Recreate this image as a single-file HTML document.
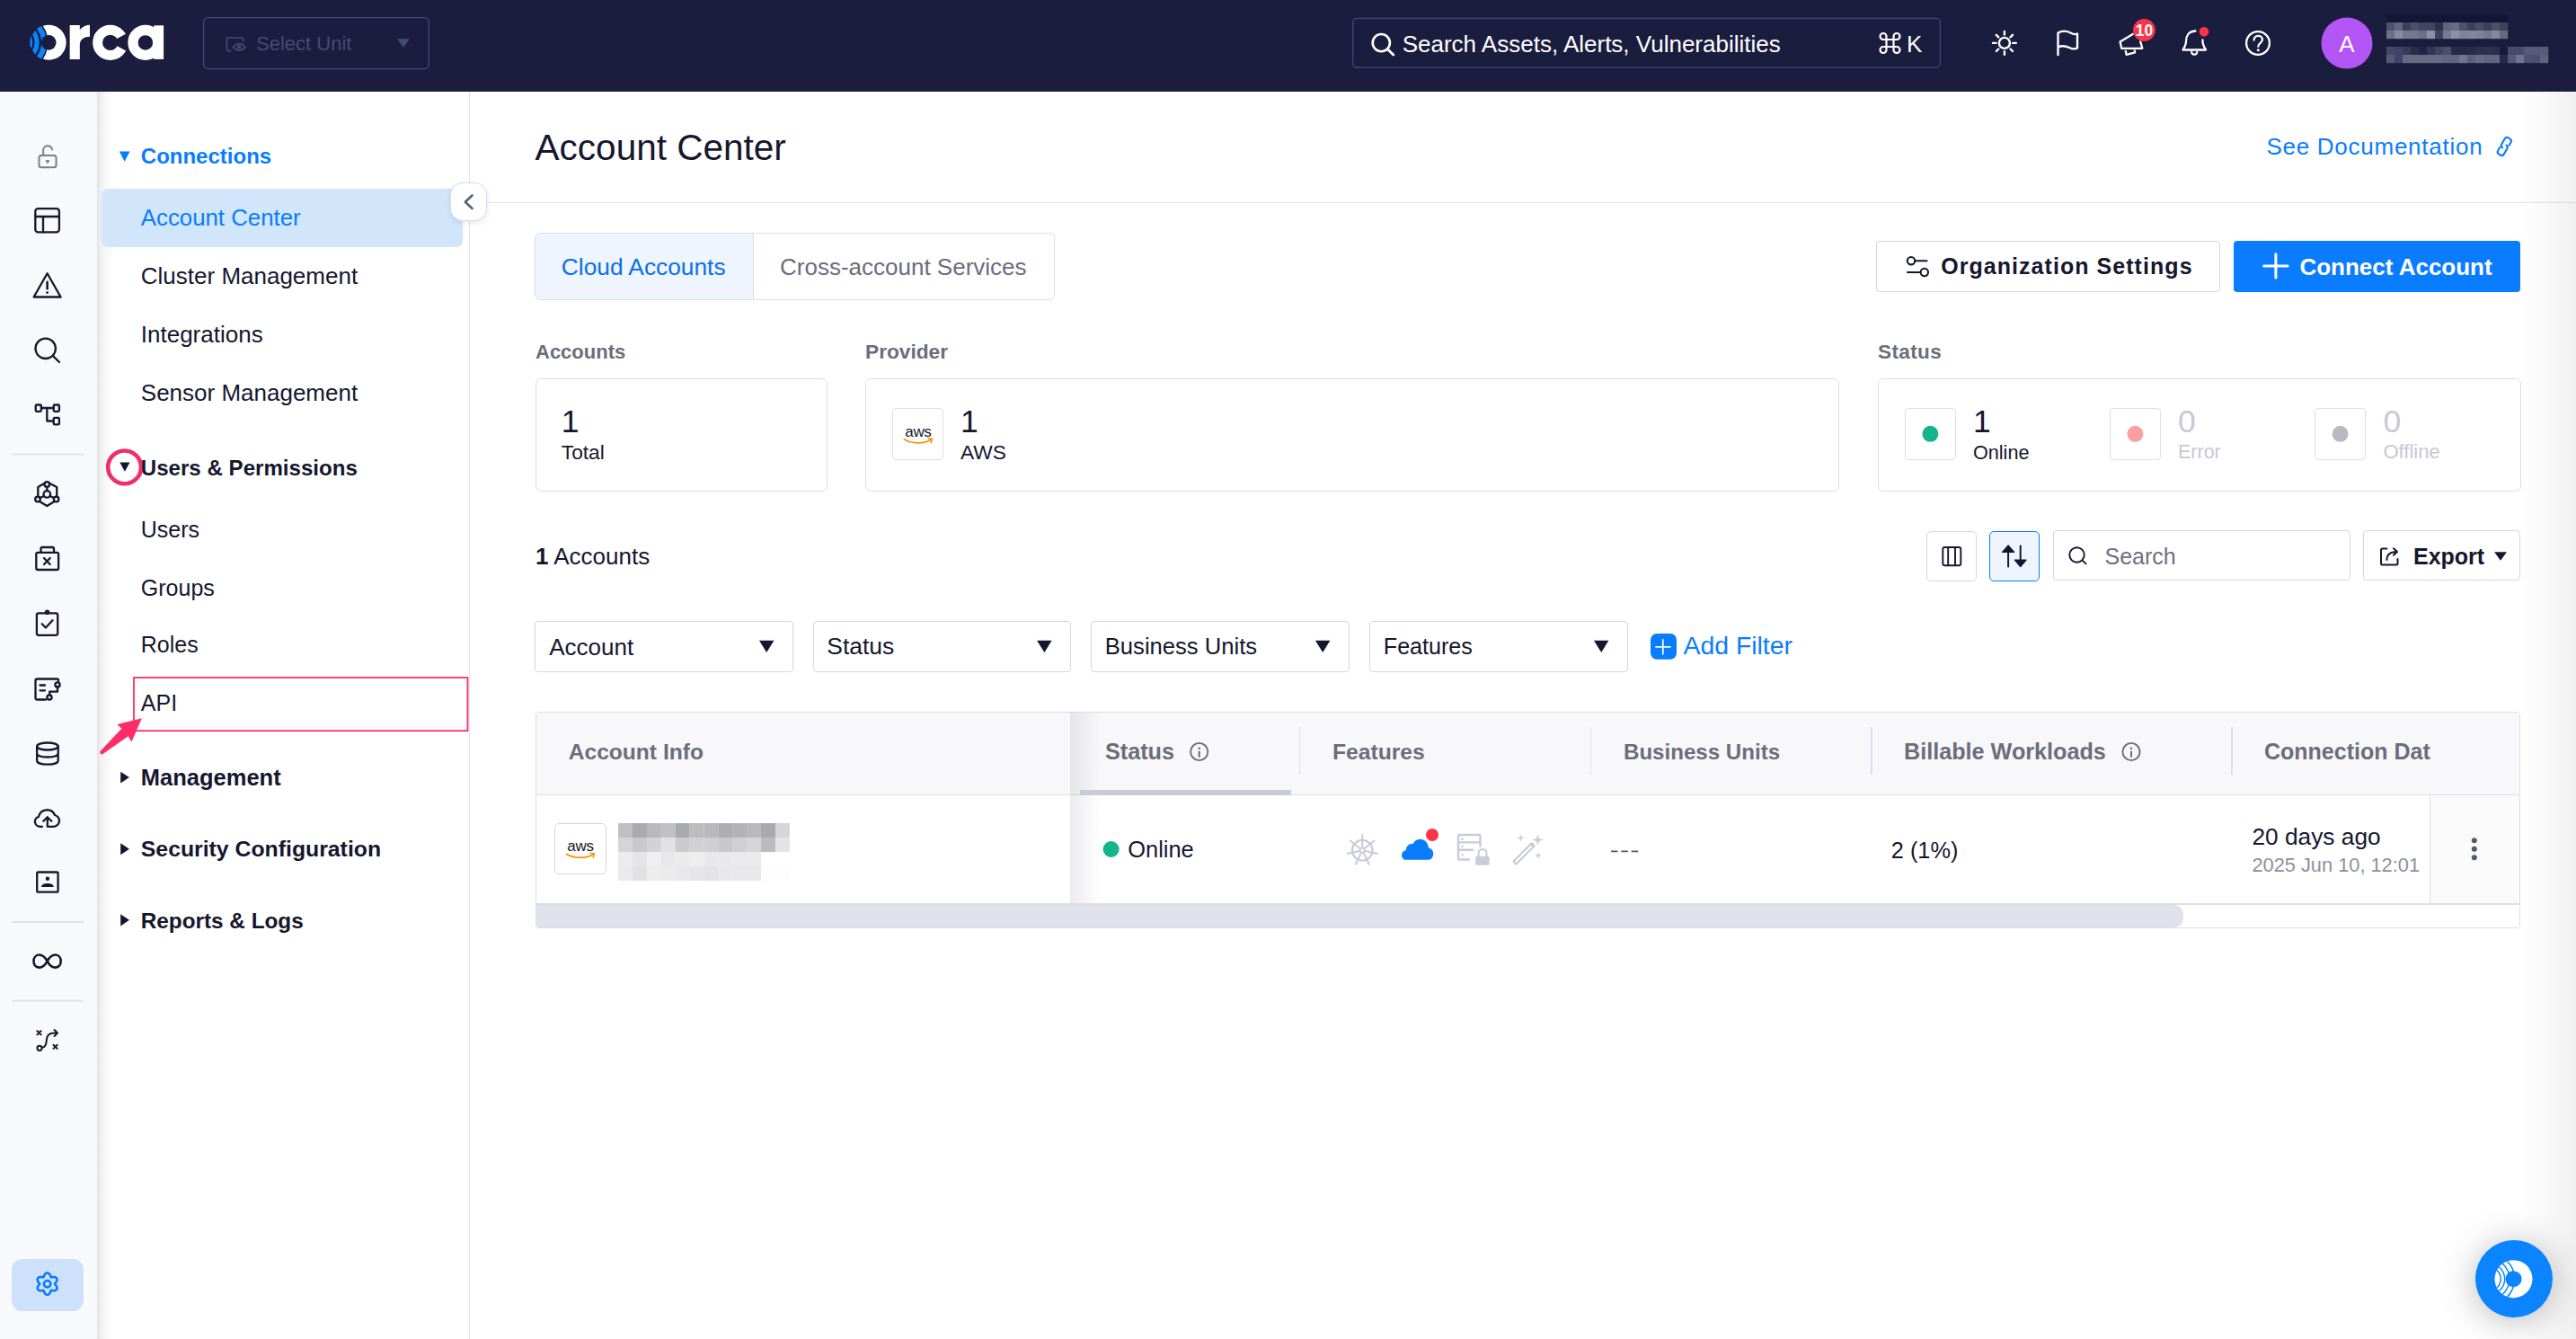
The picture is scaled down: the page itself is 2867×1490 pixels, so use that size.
<!DOCTYPE html>
<html><head><meta charset="utf-8"><title>Account Center</title>
<style>
*{box-sizing:border-box;margin:0;padding:0}
html,body{width:2867px;height:1490px;overflow:hidden;background:#fff;font-family:"Liberation Sans",sans-serif;color:#15172e}
.a{position:absolute}
.t{position:absolute;line-height:1;white-space:nowrap}
.b{font-weight:700}
#hdr{position:absolute;left:0;top:0;width:2867px;height:102px;background:#1b1d3e}
#rail{position:absolute;left:0;top:102px;width:109px;height:1388px;background:#f8f9fb;border-right:1px solid #dfe1ec}
#side{position:absolute;left:109px;top:102px;width:414px;height:1388px;background:#fff;border-right:1px solid #e3e5ec}
#side:before{content:"";position:absolute;left:0;top:0;width:18px;height:100%;background:linear-gradient(to right,rgba(0,0,0,.09),rgba(0,0,0,.03) 40%,rgba(0,0,0,0))}
.box{position:absolute;border:1.5px solid #dcdfe7;border-radius:6px;background:#fff}
</style></head>
<body>
<div id="hdr">
<svg class="a" style="left:0;top:0" width="2867" height="102" viewBox="0 0 2867 102">
 <defs><clipPath id="oc1"><circle cx="54.19" cy="47.35" r="20"/></clipPath><clipPath id="oc2"><circle cx="54.19" cy="47.35" r="20.9"/></clipPath></defs>
 <circle cx="54.19" cy="47.35" r="19.5" fill="#fff"/>
 <g clip-path="url(#oc1)">
  <circle cx="21.6" cy="47.35" r="32.02" fill="#1b1d3e"/>
  <circle cx="21.6" cy="47.35" r="27.5" fill="none" stroke="#0a84ff" stroke-width="5.8"/>
  <circle cx="21.6" cy="47.35" r="19.45" fill="none" stroke="#0a84ff" stroke-width="5.1"/>
 </g>
 <g clip-path="url(#oc2)"><circle cx="21.6" cy="47.35" r="13.0" fill="none" stroke="#0a84ff" stroke-width="3.2"/></g>
 <circle cx="54.19" cy="47.35" r="8.4" fill="#1b1d3e"/>
 <g transform="translate(20,10) scale(0.06988)" fill="#fff">
  
  <path d="M825,258 H985 V330 C1030,280 1090,255 1145,255 V440 C1060,440 985,480 985,570 V800 H825 Z"/>
  <circle cx="1470" cy="535" r="202" fill="none" stroke="#fff" stroke-width="156"/>
  <path d="M1470,530 L1830,335 L1830,725 Z" fill="#1b1d3e"/>
  <circle cx="2030" cy="535" r="199" fill="none" stroke="#fff" stroke-width="162"/>
  <rect x="2165" y="262" width="155" height="538"/>
 </g>
 <!-- select unit -->
 <rect x="226.6" y="19.6" width="250.6" height="57" rx="5" fill="none" stroke="#454d70" stroke-width="1.2"/>
 <g fill="none" stroke="#444c6d" stroke-width="1.7" stroke-linejoin="round">
  <path d="M257.5,56.6 H254 A1.6,1.6 0 0 1 252.4,55 V43.6 A1.6,1.6 0 0 1 254,42 H269 A1.6,1.6 0 0 1 270.6,43.6 V46.5"/>
  <path d="M259.3,52.3 Q266.2,44.8 273.1,52.3 Q266.2,59.8 259.3,52.3 Z"/>
 </g>
 <circle cx="266.2" cy="52.2" r="2.2" fill="#444c6d"/>
 <path d="M442,43.3 H456 L449,52.8 Z" fill="#444c6d"/>
 <!-- search -->
 <rect x="1505.75" y="20.5" width="653.5" height="54.5" rx="4" fill="none" stroke="#3d4466" stroke-width="1.5"/>
 <circle cx="1537.3" cy="47.6" r="9.6" fill="none" stroke="#fff" stroke-width="2.6"/>
 <path d="M1544.4,54.7 L1550.8,61.1" stroke="#fff" stroke-width="2.8" stroke-linecap="round"/>
 <!-- cmd symbol -->
 <g fill="none" stroke="#fff" stroke-width="2.2" transform="translate(2092.5,37)">
  <path d="M7,7 V15 M15,7 V15 M7,7 H15 M7,15 H15"/>
  <path d="M7,7 H3.5 A3.5,3.5 0 1 1 7,3.5 Z"/>
  <path d="M15,7 V3.5 A3.5,3.5 0 1 1 18.5,7 Z"/>
  <path d="M7,15 V18.5 A3.5,3.5 0 1 1 3.5,15 Z"/>
  <path d="M15,15 H18.5 A3.5,3.5 0 1 1 15,18.5 Z"/>
 </g>
 <!-- sun -->
 <g stroke="#fff" stroke-width="2.4" stroke-linecap="round" fill="none">
  <circle cx="2230.9" cy="47.9" r="6"/>
  <path d="M2230.9,35 V38.6 M2230.9,57.2 V60.8 M2218,47.9 H2221.6 M2240.2,47.9 H2243.8 M2221.8,38.8 L2224.3,41.3 M2237.5,54.5 L2240,57 M2221.8,57 L2224.3,54.5 M2237.5,41.3 L2240,38.8"/>
 </g>
 <!-- flag -->
 <g stroke="#fff" stroke-width="2.4" stroke-linecap="round" stroke-linejoin="round" fill="none">
  <path d="M2290.5,61 V36.5 C2297,33 2302,35 2305.5,37 C2308,38.3 2310,38.5 2312,37.5 V53.5 C2309,55 2306,54.5 2303,53 C2299,51 2295,50.5 2290.5,52.5"/>
 </g>
 <!-- megaphone -->
 <g stroke="#fff" stroke-width="2.3" stroke-linejoin="round" fill="none">
  <path d="M2374.5,37.5 L2359.6,46.4 L2361.2,53.8 L2384.3,53.8 L2382,45.5"/>
  <path d="M2365.6,56 L2366.6,60.8 L2376.1,58.3 L2375.4,55.4"/>
 </g>
 <circle cx="2386.4" cy="33.4" r="12.4" fill="#ff3347"/>
 <text x="2386.4" y="39.8" text-anchor="middle" font-family="Liberation Sans" font-weight="700" font-size="17.5" fill="#fff">10</text>
 <!-- bell -->
 <g stroke="#fff" stroke-width="2.3" stroke-linecap="round" stroke-linejoin="round" fill="none">
  <path d="M2443.5,34.5 C2436,34.5 2433,40 2433,46 C2433,50 2431,53 2429.5,55.5 H2455 C2453.5,53 2451.5,50 2451.5,46 V44.5"/>
  <path d="M2439.2,58 C2439.5,61.5 2445,61.5 2445.2,58"/>
 </g>
 <circle cx="2453" cy="35.3" r="5.3" fill="#ff3347"/>
 <!-- help -->
 <circle cx="2513" cy="48" r="12.9" fill="none" stroke="#fff" stroke-width="2.3"/>
 <path d="M2508.6,44.6 C2508.6,41.4 2510.8,39.8 2513.2,39.8 C2516,39.8 2518,41.6 2518,44 C2518,47.8 2513.3,48 2513.3,51.8" fill="none" stroke="#fff" stroke-width="2.3" stroke-linecap="round"/>
 <circle cx="2513.3" cy="55.8" r="1.5" fill="#fff"/>
 <!-- avatar -->
 <circle cx="2612" cy="48" r="28.5" fill="#b455f5"/>
 <text x="2612" y="57.5" text-anchor="middle" font-family="Liberation Sans" font-size="26" fill="#fff">A</text>
 <rect x="2656" y="16" width="9.2" height="9.2" fill="#141637"/><rect x="2665" y="16" width="9.2" height="9.2" fill="#141637"/><rect x="2674" y="16" width="9.2" height="9.2" fill="#141637"/><rect x="2683" y="16" width="9.2" height="9.2" fill="#141637"/><rect x="2692" y="16" width="9.2" height="9.2" fill="#141637"/><rect x="2701" y="16" width="9.2" height="9.2" fill="#141637"/><rect x="2710" y="16" width="9.2" height="9.2" fill="#141637"/><rect x="2719" y="16" width="9.2" height="9.2" fill="#141637"/><rect x="2728" y="16" width="9.2" height="9.2" fill="#141637"/><rect x="2737" y="16" width="9.2" height="9.2" fill="#141637"/><rect x="2746" y="16" width="9.2" height="9.2" fill="#141637"/><rect x="2755" y="16" width="9.2" height="9.2" fill="#141637"/><rect x="2764" y="16" width="9.2" height="9.2" fill="#141637"/><rect x="2773" y="16" width="9.2" height="9.2" fill="#141637"/><rect x="2782" y="16" width="9.2" height="9.2" fill="#141637"/><rect x="2656" y="25" width="9.2" height="9.2" fill="#4f5170"/><rect x="2665" y="25" width="9.2" height="9.2" fill="#626480"/><rect x="2674" y="25" width="9.2" height="9.2" fill="#3c3f5e"/><rect x="2683" y="25" width="9.2" height="9.2" fill="#4c4f6c"/><rect x="2692" y="25" width="9.2" height="9.2" fill="#42455f"/><rect x="2701" y="25" width="9.2" height="9.2" fill="#42455f"/><rect x="2710" y="25" width="9.2" height="9.2" fill="#2f3150"/><rect x="2719" y="25" width="9.2" height="9.2" fill="#62647e"/><rect x="2728" y="25" width="9.2" height="9.2" fill="#6a6c85"/><rect x="2737" y="25" width="9.2" height="9.2" fill="#4f526e"/><rect x="2746" y="25" width="9.2" height="9.2" fill="#3d405d"/><rect x="2755" y="25" width="9.2" height="9.2" fill="#4a4d69"/><rect x="2764" y="25" width="9.2" height="9.2" fill="#3c3f5c"/><rect x="2773" y="25" width="9.2" height="9.2" fill="#4d506b"/><rect x="2782" y="25" width="9.2" height="9.2" fill="#3e4160"/><rect x="2656" y="34" width="9.2" height="9.2" fill="#6e7088"/><rect x="2665" y="34" width="9.2" height="9.2" fill="#878a9d"/><rect x="2674" y="34" width="9.2" height="9.2" fill="#767890"/><rect x="2683" y="34" width="9.2" height="9.2" fill="#767a90"/><rect x="2692" y="34" width="9.2" height="9.2" fill="#6d7088"/><rect x="2701" y="34" width="9.2" height="9.2" fill="#8d90a3"/><rect x="2710" y="34" width="9.2" height="9.2" fill="#3f4260"/><rect x="2719" y="34" width="9.2" height="9.2" fill="#777a90"/><rect x="2728" y="34" width="9.2" height="9.2" fill="#8e91a4"/><rect x="2737" y="34" width="9.2" height="9.2" fill="#80839a"/><rect x="2746" y="34" width="9.2" height="9.2" fill="#85889c"/><rect x="2755" y="34" width="9.2" height="9.2" fill="#7f8298"/><rect x="2764" y="34" width="9.2" height="9.2" fill="#76798f"/><rect x="2773" y="34" width="9.2" height="9.2" fill="#86899d"/><rect x="2782" y="34" width="9.2" height="9.2" fill="#666880"/><rect x="2656" y="52" width="9.2" height="9.2" fill="#46486a"/><rect x="2665" y="52" width="9.2" height="9.2" fill="#424466"/><rect x="2674" y="52" width="9.2" height="9.2" fill="#383a5c"/><rect x="2683" y="52" width="9.2" height="9.2" fill="#2b2d4c"/><rect x="2692" y="52" width="9.2" height="9.2" fill="#222444"/><rect x="2701" y="52" width="9.2" height="9.2" fill="#323455"/><rect x="2710" y="52" width="9.2" height="9.2" fill="#404262"/><rect x="2719" y="52" width="9.2" height="9.2" fill="#4b4e6c"/><rect x="2728" y="52" width="9.2" height="9.2" fill="#272948"/><rect x="2737" y="52" width="9.2" height="9.2" fill="#262848"/><rect x="2746" y="52" width="9.2" height="9.2" fill="#292b4b"/><rect x="2755" y="52" width="9.2" height="9.2" fill="#2e3050"/><rect x="2764" y="52" width="9.2" height="9.2" fill="#2e3050"/><rect x="2773" y="52" width="9.2" height="9.2" fill="#2d2f4e"/><rect x="2782" y="52" width="9.2" height="9.2" fill="#181a38"/><rect x="2791" y="52" width="9.2" height="9.2" fill="#484b6b"/><rect x="2800" y="52" width="9.2" height="9.2" fill="#484b6b"/><rect x="2809" y="52" width="9.2" height="9.2" fill="#575a78"/><rect x="2818" y="52" width="9.2" height="9.2" fill="#575a78"/><rect x="2827" y="52" width="9.2" height="9.2" fill="#575a78"/><rect x="2656" y="61" width="9.2" height="9.2" fill="#56597a"/><rect x="2665" y="61" width="9.2" height="9.2" fill="#40436a"/><rect x="2674" y="61" width="9.2" height="9.2" fill="#686a82"/><rect x="2683" y="61" width="9.2" height="9.2" fill="#686a82"/><rect x="2692" y="61" width="9.2" height="9.2" fill="#686a82"/><rect x="2701" y="61" width="9.2" height="9.2" fill="#686a82"/><rect x="2710" y="61" width="9.2" height="9.2" fill="#686a82"/><rect x="2719" y="61" width="9.2" height="9.2" fill="#626480"/><rect x="2728" y="61" width="9.2" height="9.2" fill="#626480"/><rect x="2737" y="61" width="9.2" height="9.2" fill="#72748c"/><rect x="2746" y="61" width="9.2" height="9.2" fill="#5c5e78"/><rect x="2755" y="61" width="9.2" height="9.2" fill="#686a84"/><rect x="2764" y="61" width="9.2" height="9.2" fill="#636580"/><rect x="2773" y="61" width="9.2" height="9.2" fill="#626480"/><rect x="2782" y="61" width="9.2" height="9.2" fill="#282a4a"/><rect x="2791" y="61" width="9.2" height="9.2" fill="#565878"/><rect x="2800" y="61" width="9.2" height="9.2" fill="#707290"/><rect x="2809" y="61" width="9.2" height="9.2" fill="#505370"/><rect x="2818" y="61" width="9.2" height="9.2" fill="#4c506e"/><rect x="2827" y="61" width="9.2" height="9.2" fill="#60627e"/>
</svg>
<div class="t" style="left:285px;top:37.6px;font-size:22px;color:#444c6d">Select Unit</div>
<div class="t" style="left:1560.7px;top:35.5px;font-size:26px;color:#fff">Search Assets, Alerts, Vulnerabilities</div>
<div class="t" style="left:2122px;top:35.5px;font-size:26px;color:#fff">K</div>
</div>
<div id="rail">
<svg class="a" style="left:0;top:-102px" width="108" height="1490" viewBox="0 0 108 1490">
 <g fill="none" stroke="#15172e" stroke-width="2.3" stroke-linecap="round" stroke-linejoin="round">
  <!-- lock (gray) -->
  <g stroke="#7b7d89" stroke-width="2">
   <rect x="43.5" y="173" width="19" height="13.3" rx="2.5"/>
   <path d="M48.2,173 V168 A5,5 0 0 1 58.2,166.5"/>
  </g>
  <path d="M51.3,178.7 H54.9 L53.1,181.5 Z" fill="#7b7d89" stroke="#7b7d89" stroke-width="1"/>
  <!-- layout -->
  <rect x="39.3" y="232.1" width="26.6" height="26.2" rx="3"/>
  <path d="M39.3,241 H65.9 M48,241 V258.3"/>
  <!-- warning -->
  <path d="M52.6,304.3 L67.6,330.5 H37.6 Z"/>
  <path d="M52.6,313.8 V321.3" stroke-width="2.5"/>
  <circle cx="52.6" cy="325.6" r="1.4" fill="#15172e" stroke="none"/>
  <!-- search -->
  <circle cx="50.7" cy="387.8" r="11.2"/>
  <path d="M58.8,395.9 L66,403"/>
  <!-- tree -->
  <rect x="39.7" y="450.5" width="6.2" height="7.3" rx="1.2"/>
  <rect x="59.7" y="450.5" width="6.2" height="7.3" rx="1.2"/>
  <rect x="59.7" y="464.8" width="6.2" height="7.6" rx="1.2"/>
  <path d="M45.9,454 H59.7 M52.3,454 V468.5 H59.7"/>
  <!-- network -->
  <path d="M49.6,537.8 L42.3,542 V553 M55,537.8 L63.2,542 V553 M44,558 L52.3,563 L60.6,558"/>
  <circle cx="52.3" cy="549.9" r="3.8"/>
  <circle cx="52.3" cy="539" r="2.8"/>
  <circle cx="42" cy="555.5" r="2.8"/>
  <circle cx="62.6" cy="555.5" r="2.8"/>
  <path d="M52.3,541.8 V546 M44.5,554 L49,552 M60,554 L55.6,552"/>
  <!-- box-x -->
  <rect x="40.3" y="614.8" width="24.8" height="19.2" rx="1.8"/>
  <path d="M45.5,614.8 V610.5 A1.5,1.5 0 0 1 47,609 H58.5 A1.5,1.5 0 0 1 60,610.5 V614.8"/>
  <path d="M49,621 L55.7,628 M55.7,621 L49,628"/>
  <!-- clipboard -->
  <rect x="40.9" y="682.3" width="23.3" height="24.5" rx="2"/>
  <circle cx="52.5" cy="681.3" r="1.6"/>
  <path d="M46.7,694.2 L50.9,698.5 L58.5,690.3"/>
  <!-- report -->
  <path d="M51,778.5 H41.5 A2,2 0 0 1 39.5,776.5 V757.5 A2,2 0 0 1 41.5,755.5 H63.5 A1.5,1.5 0 0 1 65,757 V758.5"/>
  <path d="M64,764 V769.7 H55.2 V773.5"/>
  <circle cx="64" cy="762" r="2.6"/>
  <circle cx="55" cy="776" r="2.6"/>
  <path d="M44.5,762.5 H50 M44.5,768.3 H50"/>
  <!-- database -->
  <ellipse cx="52.9" cy="830.5" rx="11.8" ry="4"/>
  <path d="M41.1,830.5 V846.5 C41.1,852 64.7,852 64.7,846.5 V830.5 M41.1,838.5 C41.1,843.8 64.7,843.8 64.7,838.5"/>
  <!-- cloud upload -->
  <path d="M47,919.8 H44.5 A5.6,5.6 0 0 1 43,908.8 A9.5,9.5 0 0 1 61,907 A6.5,6.5 0 0 1 59,919.8 H54"/>
  <path d="M52.8,919.8 V909.5 M48.3,913.8 L52.8,909.3 L57.3,913.8"/>
  <!-- contact -->
  <rect x="41.2" y="970.5" width="23.4" height="22.2" rx="1.5"/>
  <circle cx="52.9" cy="977.8" r="2.2" fill="#15172e" stroke="none"/>
  <path d="M46.6,986.5 C47.5,982.5 58.3,982.5 59.2,986.5 Z" fill="#15172e" stroke-width="1.2"/>
  <!-- infinity -->
  <path d="M52.6,1069.6 C49.5,1063.8 46.5,1062.5 43.6,1062.5 C39.5,1062.5 37.5,1066 37.5,1069.6 C37.5,1073.2 39.5,1076.6 43.6,1076.6 C46.5,1076.6 49.5,1075.3 52.6,1069.6 C55.7,1063.8 58.7,1062.5 61.6,1062.5 C65.7,1062.5 67.7,1066 67.7,1069.6 C67.7,1073.2 65.7,1076.6 61.6,1076.6 C58.7,1076.6 55.7,1075.3 52.6,1069.6" stroke-width="2.6"/>
  <!-- route -->
  <g stroke-width="2">
   <path d="M41.4,1147.2 L45.6,1151.3 M45.6,1147.2 L41.4,1151.3"/>
   <path d="M59.5,1162.8 L63.7,1166.9 M63.7,1162.8 L59.5,1166.9"/>
   <circle cx="44" cy="1166.3" r="2.6"/>
   <path d="M46.6,1165.8 C52.5,1165 51,1159 52.5,1154 C53.5,1150.5 57,1149 63.5,1149.5 M60.5,1146 L64,1149.5 L60.5,1153"/>
  </g>
 </g>
 <g fill="#e1e3eb">
  <rect x="13" y="504.6" width="80" height="2"/>
  <rect x="13" y="1025" width="80" height="2"/>
  <rect x="13" y="1112.7" width="80" height="2"/>
 </g>
 <rect x="13" y="1401" width="80" height="58" rx="12" fill="#cde2fa"/>
 <g fill="none" stroke="#0a7cff" stroke-width="2.6" stroke-linejoin="round">
  <path d="M61.00,1428.60 L61.16,1428.90 L61.40,1429.22 L61.68,1429.55 L61.99,1429.92 L62.29,1430.31 L62.58,1430.72 L62.85,1431.16 L63.09,1431.61 L63.28,1432.07 L63.41,1432.54 L63.49,1433.00 L63.51,1433.46 L63.46,1433.90 L63.35,1434.31 L63.17,1434.70 L62.92,1435.05 L62.62,1435.36 L62.26,1435.62 L61.86,1435.83 L61.41,1436.00 L60.94,1436.11 L60.45,1436.18 L59.94,1436.20 L59.43,1436.18 L58.92,1436.14 L58.44,1436.07 L57.97,1435.99 L57.53,1435.91 L57.14,1435.86 L56.80,1435.87 L56.62,1436.16 L56.47,1436.53 L56.32,1436.94 L56.15,1437.39 L55.97,1437.85 L55.75,1438.31 L55.51,1438.76 L55.24,1439.18 L54.93,1439.58 L54.60,1439.93 L54.24,1440.23 L53.85,1440.48 L53.44,1440.65 L53.02,1440.76 L52.60,1440.80 L52.18,1440.76 L51.76,1440.65 L51.35,1440.48 L50.96,1440.23 L50.60,1439.93 L50.27,1439.58 L49.96,1439.18 L49.69,1438.76 L49.45,1438.31 L49.23,1437.85 L49.05,1437.39 L48.88,1436.94 L48.73,1436.53 L48.58,1436.16 L48.40,1435.87 L48.06,1435.86 L47.67,1435.91 L47.23,1435.99 L46.76,1436.07 L46.28,1436.14 L45.77,1436.18 L45.26,1436.20 L44.75,1436.18 L44.26,1436.11 L43.79,1436.00 L43.34,1435.83 L42.94,1435.62 L42.58,1435.36 L42.28,1435.05 L42.03,1434.70 L41.85,1434.31 L41.74,1433.90 L41.69,1433.46 L41.71,1433.00 L41.79,1432.54 L41.92,1432.07 L42.11,1431.61 L42.35,1431.16 L42.62,1430.72 L42.91,1430.31 L43.21,1429.92 L43.52,1429.55 L43.80,1429.22 L44.04,1428.90 L44.20,1428.60 L44.04,1428.30 L43.80,1427.98 L43.52,1427.65 L43.21,1427.28 L42.91,1426.89 L42.62,1426.48 L42.35,1426.04 L42.11,1425.59 L41.92,1425.13 L41.79,1424.66 L41.71,1424.20 L41.69,1423.74 L41.74,1423.30 L41.85,1422.89 L42.03,1422.50 L42.28,1422.15 L42.58,1421.84 L42.94,1421.58 L43.34,1421.37 L43.79,1421.20 L44.26,1421.09 L44.75,1421.02 L45.26,1421.00 L45.77,1421.02 L46.28,1421.06 L46.76,1421.13 L47.23,1421.21 L47.67,1421.29 L48.06,1421.34 L48.40,1421.33 L48.58,1421.04 L48.73,1420.67 L48.88,1420.26 L49.05,1419.81 L49.23,1419.35 L49.45,1418.89 L49.69,1418.44 L49.96,1418.02 L50.27,1417.62 L50.60,1417.27 L50.96,1416.97 L51.35,1416.72 L51.76,1416.55 L52.18,1416.44 L52.60,1416.40 L53.02,1416.44 L53.44,1416.55 L53.85,1416.72 L54.24,1416.97 L54.60,1417.27 L54.93,1417.62 L55.24,1418.02 L55.51,1418.44 L55.75,1418.89 L55.97,1419.35 L56.15,1419.81 L56.32,1420.26 L56.47,1420.67 L56.62,1421.04 L56.80,1421.33 L57.14,1421.34 L57.53,1421.29 L57.97,1421.21 L58.44,1421.13 L58.92,1421.06 L59.43,1421.02 L59.94,1421.00 L60.45,1421.02 L60.94,1421.09 L61.41,1421.20 L61.86,1421.37 L62.26,1421.58 L62.62,1421.84 L62.92,1422.15 L63.17,1422.50 L63.35,1422.89 L63.46,1423.30 L63.51,1423.74 L63.49,1424.20 L63.41,1424.66 L63.28,1425.13 L63.09,1425.59 L62.85,1426.04 L62.58,1426.48 L62.29,1426.89 L61.99,1427.28 L61.68,1427.65 L61.40,1427.98 L61.16,1428.30 Z"/>
  <circle cx="52.6" cy="1428.7" r="3.7"/>
 </g>
</svg>
</div>
<div id="side"></div>
<div class="a" style="left:113px;top:209.8px;width:402px;height:65px;border-radius:7px;background:#d1e5fb"></div>
<svg class="a" style="left:0;top:0" width="540" height="1100" viewBox="0 0 540 1100">
 <path d="M132.8,168.6 H144.5 L138.65,179.8 Z" fill="#0a7cff"/>
 <path d="M133.3,514.5 H144.5 L138.9,524.8 Z" fill="#15172e"/>
 <circle cx="138.6" cy="519.9" r="18.4" fill="none" stroke="#ee2f6c" stroke-width="4.6"/>
 <path d="M134.2,858.7 L143.9,865.1 L134.2,871.5 Z" fill="#15172e"/>
 <path d="M134.2,938.3 L143.9,944.75 L134.2,951.2 Z" fill="#15172e"/>
 <path d="M134.2,1017.2 L143.9,1023.8 L134.2,1030.4 Z" fill="#15172e"/>
 <rect x="149" y="754" width="371.5" height="59.2" fill="none" stroke="#fe2d68" stroke-width="1.8"/>
 <path d="M111.5,838 C110.8,837.2 111,836.4 112,835.6 L135.3,810.7 L130.4,806.1 L157.9,799.2 L146.4,825.5 L142.7,819.3 L114.2,839.2 C113.2,839.8 112.2,839 111.5,838 Z" fill="#fe2d68"/>
</svg>
<div class="t b" style="left:156.8px;top:162.1px;font-size:24px;color:#0a7cff">Connections</div>
<div class="t" style="left:156.8px;top:230.4px;font-size:25.8px;color:#0a7cff">Account Center</div>
<div class="t" style="left:156.8px;top:294.2px;font-size:26px">Cluster Management</div>
<div class="t" style="left:156.8px;top:358.9px;font-size:26px">Integrations</div>
<div class="t" style="left:156.8px;top:423.7px;font-size:26px">Sensor Management</div>
<div class="t b" style="left:156.8px;top:509px;font-size:24.1px">Users &amp; Permissions</div>
<div class="t" style="left:156.8px;top:577.3px;font-size:25px">Users</div>
<div class="t" style="left:156.8px;top:642.1px;font-size:25px">Groups</div>
<div class="t" style="left:156.8px;top:705.2px;font-size:25px">Roles</div>
<div class="t" style="left:156.8px;top:769.9px;font-size:25px">API</div>
<div class="t b" style="left:156.8px;top:852.5px;font-size:25.5px">Management</div>
<div class="t b" style="left:156.8px;top:933.3px;font-size:24.8px">Security Configuration</div>
<div class="t b" style="left:156.8px;top:1012.9px;font-size:24.3px">Reports &amp; Logs</div>

<div id="main">
<div class="t" style="left:595.6px;top:143.8px;font-size:40.5px;color:#15172e">Account Center</div>
<div class="t" style="left:2522.4px;top:149.9px;font-size:26px;color:#0a7cff;letter-spacing:0.74px">See Documentation</div>
<div class="a" style="left:522px;top:224.8px;width:2345px;height:1.2px;background:#e2e3ee"></div>
<div class="a" style="left:500.8px;top:203.4px;width:41.6px;height:42.2px;border-radius:14px;background:#fff;border:1.2px solid #dedcec;box-shadow:0 2px 6px rgba(20,25,60,.10)"></div>
<div class="box" style="left:595px;top:258.8px;width:578.5px;height:75px;overflow:hidden"><div class="a" style="left:0;top:0;width:243.2px;height:100%;background:#eef5fe;border-right:1.5px solid #dcdfe7"></div></div>
<div class="t" style="left:624.8px;top:283.7px;font-size:26.3px;color:#0a70e8">Cloud Accounts</div>
<div class="t" style="left:868.0px;top:284.0px;font-size:26px;color:#6b6d7b">Cross-account Services</div>
<div class="a" style="left:2087.5px;top:268.3px;width:383px;height:56.5px;border:1.5px solid #d3d7e1;border-radius:4px;background:#fff"></div>
<div class="a" style="left:2486px;top:268.3px;width:319px;height:56.5px;border-radius:4px;background:#0a7cff"></div>
<div class="t b" style="left:2160.2px;top:284.3px;font-size:25px;color:#15172e;letter-spacing:1.05px">Organization Settings</div>
<div class="t b" style="left:2559.4px;top:283.5px;font-size:26px;color:#fff">Connect Account</div>
<div class="t b" style="left:596.0px;top:380.9px;font-size:22px;color:#6b6d7b">Accounts</div>
<div class="t b" style="left:963.0px;top:380.3px;font-size:22.7px;color:#6b6d7b">Provider</div>
<div class="t b" style="left:2090.0px;top:381.1px;font-size:22.5px;color:#6b6d7b;letter-spacing:.4px">Status</div>
<div class="box" style="left:595.5px;top:420.5px;width:325px;height:126.5px"></div>
<div class="box" style="left:962.5px;top:420.5px;width:1084px;height:126.5px"></div>
<div class="box" style="left:2089.5px;top:420.5px;width:716px;height:126.5px"></div>
<div class="a" style="left:993.4px;top:453.8px;width:57px;height:58px;border:1.5px solid #dcdfe7;border-radius:4px;background:#fff"></div>
<div class="a" style="left:2120px;top:453.8px;width:57px;height:58px;border:1.5px solid #dcdfe7;border-radius:4px;background:#fff"></div>
<div class="a" style="left:2348px;top:453.8px;width:57px;height:58px;border:1.5px solid #dcdfe7;border-radius:4px;background:#fff"></div>
<div class="a" style="left:2576px;top:453.8px;width:57px;height:58px;border:1.5px solid #dcdfe7;border-radius:4px;background:#fff"></div>
<div class="t" style="left:624.8px;top:451.6px;font-size:35.5px;color:#15172e">1</div>
<div class="t" style="left:624.8px;top:491.8px;font-size:22.7px;color:#15172e">Total</div>
<div class="t" style="left:1069.0px;top:451.6px;font-size:35.5px;color:#15172e">1</div>
<div class="t" style="left:1069.0px;top:491.8px;font-size:22.7px;color:#15172e">AWS</div>
<div class="t" style="left:2196.0px;top:451.6px;font-size:35.5px;color:#15172e">1</div>
<div class="t" style="left:2196.0px;top:492.7px;font-size:21.6px;color:#15172e">Online</div>
<div class="t" style="left:2424.0px;top:451.6px;font-size:35.5px;color:#c5c9d5">0</div>
<div class="t" style="left:2424.0px;top:492.8px;font-size:21.5px;color:#c5c9d5">Error</div>
<div class="t" style="left:2652.5px;top:451.6px;font-size:35.5px;color:#c5c9d5">0</div>
<div class="t" style="left:2652.5px;top:492.4px;font-size:22px;color:#c5c9d5">Offline</div>
<svg class="a" style="left:0;top:0" width="2867" height="1490" viewBox="0 0 2867 1490"><circle cx="2148.4" cy="482.8" r="9" fill="#14b48c"/><circle cx="2376.4" cy="482.8" r="9" fill="#fb9fa2"/><circle cx="2604.6" cy="482.8" r="9" fill="#b9b9c1"/><g transform="translate(1021.9,482.5) scale(1.0)"><text x="0" y="3" text-anchor="middle" font-family="Liberation Sans" font-size="17" font-weight="400" fill="#15172e" letter-spacing="-0.3">aws</text><path d="M-15.5,6.5 C-7,11.5 7,11.5 14,6.8" fill="none" stroke="#f79400" stroke-width="1.8" stroke-linecap="round"/><path d="M11,5.3 L15.5,6 L14.2,10" fill="none" stroke="#f79400" stroke-width="1.6" stroke-linecap="round" stroke-linejoin="round"/></g><path d="M525.5,217.5 L517.8,224.7 L525.5,232" fill="none" stroke="#5e6170" stroke-width="2.6" stroke-linecap="round" stroke-linejoin="round"/><g fill="none" stroke="#0a7cff" stroke-width="2.1" stroke-linecap="round" transform="translate(2787.4,163) rotate(30)"><path d="M3.8,-3.7 V-7.5 A3,3 0 0 0 0.8,-10.5 H-1 A3,3 0 0 0 -4,-7.5 V-0.5 A3,3 0 0 0 -1.3,2.3"/><path d="M-4,3.7 V7.5 A3,3 0 0 0 -1,10.5 H0.8 A3,3 0 0 0 3.8,7.5 V0.5 A3,3 0 0 0 1.1,-2.3"/></g><g fill="none" stroke="#15172e" stroke-width="2.1" stroke-linecap="round"><circle cx="2127" cy="290.2" r="4.2"/><path d="M2131.5,290.2 H2144.6"/><circle cx="2141.8" cy="303" r="4.2"/><path d="M2123,303 H2137.4"/></g><path d="M2532.9,282.7 V309.1 M2519.7,295.9 H2546.1" stroke="#fff" stroke-width="3" stroke-linecap="round"/></svg>
<div class="t" style="left:596.0px;top:606.4px;font-size:26px;color:#15172e"><b>1</b> Accounts</div>
<div class="a" style="left:2144.3px;top:591.3px;width:55.5px;height:55.4px;border:1.5px solid #d3d7e1;border-radius:5px;background:#fff"></div>
<div class="a" style="left:2214.2px;top:591.3px;width:55.5px;height:55.4px;border:1.8px solid #0a7cff;border-radius:5px;background:#eef5fe"></div>
<div class="a" style="left:2285px;top:590.4px;width:331px;height:56px;border:1.5px solid #d3d7e1;border-radius:4px;background:#fff"></div>
<div class="a" style="left:2630px;top:590.4px;width:175px;height:56px;border:1.5px solid #d3d7e1;border-radius:4px;background:#fff"></div>
<div class="t" style="left:2342.5px;top:607.2px;font-size:25px;color:#6e7080">Search</div>
<div class="t b" style="left:2686.0px;top:607.2px;font-size:25px;color:#15172e">Export</div>
<div class="a" style="left:595.4px;top:691.2px;width:287.2px;height:56.4px;border:1.5px solid #d3d7e1;border-radius:4px;background:#fff"></div>
<div class="t" style="left:611.2px;top:706.6px;font-size:26px;color:#15172e">Account</div>
<div class="a" style="left:904.5px;top:691.2px;width:287.2px;height:56.4px;border:1.5px solid #d3d7e1;border-radius:4px;background:#fff"></div>
<div class="t" style="left:920.3px;top:706.2px;font-size:26.4px;color:#15172e">Status</div>
<div class="a" style="left:1214px;top:691.2px;width:287.5px;height:56.4px;border:1.5px solid #d3d7e1;border-radius:4px;background:#fff"></div>
<div class="t" style="left:1229.8px;top:706.9px;font-size:25.6px;color:#15172e">Business Units</div>
<div class="a" style="left:1524px;top:691.2px;width:287.5px;height:56.4px;border:1.5px solid #d3d7e1;border-radius:4px;background:#fff"></div>
<div class="t" style="left:1539.8px;top:707.3px;font-size:25.1px;color:#15172e">Features</div>
<div class="t" style="left:1873.5px;top:704.4px;font-size:28.4px;color:#0a7cff">Add Filter</div>
<div class="a" style="left:595.5px;top:791.6px;width:2209.5px;height:241px;border:1.5px solid #dcdfe7;border-radius:4px;background:#fff;overflow:hidden"><div class="a" style="left:0;top:0;width:100%;height:92px;background:#f8f8fa;border-bottom:1.5px solid #dcdfe7"></div><div class="a" style="left:0;top:212.5px;width:100%;height:1.5px;background:#dcdfe7"></div><div class="a" style="left:0;top:214px;width:1833px;height:25px;background:#e0e2eb;border-radius:0 10px 10px 0"></div><div class="a" style="left:2107.3px;top:92px;width:102px;height:120.5px;background:#fafafb;border-left:1.5px solid #dcdfe7"></div><div class="a" style="left:594.2px;top:0;width:34px;height:212.5px;background:linear-gradient(to right,rgba(30,35,70,.09),rgba(30,35,70,0))"></div><div class="a" style="left:605px;top:86.8px;width:235px;height:5.2px;background:#c9ccd8"></div><div class="a" style="left:849.2px;top:16.5px;width:1.5px;height:53px;background:#dcdfe7"></div><div class="a" style="left:1173.0px;top:16.5px;width:1.5px;height:53px;background:#dcdfe7"></div><div class="a" style="left:1485.6px;top:16.5px;width:1.5px;height:53px;background:#dcdfe7"></div><div class="a" style="left:1886.8px;top:16.5px;width:1.5px;height:53px;background:#dcdfe7"></div></div>
<div class="t b" style="left:632.7px;top:824.8px;font-size:24.6px;color:#6b6d7b">Account Info</div>
<div class="t b" style="left:1230.0px;top:824.3px;font-size:25.2px;color:#6b6d7b">Status</div>
<div class="t b" style="left:1482.9px;top:824.7px;font-size:24.7px;color:#6b6d7b">Features</div>
<div class="t b" style="left:1807.0px;top:825.2px;font-size:24.1px;color:#6b6d7b">Business Units</div>
<div class="t b" style="left:2119.0px;top:824.3px;font-size:25.2px;color:#6b6d7b">Billable Workloads</div>
<div class="t b" style="left:2520.0px;top:824.4px;font-size:25px;color:#6b6d7b">Connection Dat</div>
<div class="t" style="left:1255.3px;top:932.7px;font-size:25.4px;color:#15172e">Online</div>
<div class="t" style="left:2104.8px;top:934.0px;font-size:25.3px;color:#15172e">2 (1%)</div>
<div class="t" style="left:2506.4px;top:918.0px;font-size:26.3px;color:#15172e">20 days ago</div>
<div class="t" style="left:2506.4px;top:952.4px;font-size:21.8px;color:#8d909c">2025 Jun 10, 12:01</div>
<div class="a" style="left:617.4px;top:916.2px;width:57.2px;height:57.2px;border:1.5px solid #d3d7e1;border-radius:5px;background:#fff"></div>
<svg class="a" style="left:0;top:0" width="2867" height="1490" viewBox="0 0 2867 1490"><rect x="688.0" y="916" width="16.1" height="16.1" fill="#c0c0c3"/><rect x="703.9" y="916" width="16.1" height="16.1" fill="#a9aaae"/><rect x="719.8" y="916" width="16.1" height="16.1" fill="#b9b9bc"/><rect x="735.7" y="916" width="16.1" height="16.1" fill="#c0c1c4"/><rect x="751.6" y="916" width="16.1" height="16.1" fill="#a9aaae"/><rect x="767.5" y="916" width="16.1" height="16.1" fill="#bdbdbf"/><rect x="783.4" y="916" width="16.1" height="16.1" fill="#b9b9bd"/><rect x="799.3" y="916" width="16.1" height="16.1" fill="#aeaeb2"/><rect x="815.2" y="916" width="16.1" height="16.1" fill="#b3b3b7"/><rect x="831.1" y="916" width="16.1" height="16.1" fill="#b9b9bd"/><rect x="847.0" y="916" width="16.1" height="16.1" fill="#aaaaae"/><rect x="862.9" y="916" width="16.1" height="16.1" fill="#d6d6d9"/><rect x="688.0" y="932" width="16.1" height="16.1" fill="#d5d5d8"/><rect x="703.9" y="932" width="16.1" height="16.1" fill="#c9c9cc"/><rect x="719.8" y="932" width="16.1" height="16.1" fill="#d3d3d6"/><rect x="735.7" y="932" width="16.1" height="16.1" fill="#e2e2e3"/><rect x="751.6" y="932" width="16.1" height="16.1" fill="#cbcbce"/><rect x="767.5" y="932" width="16.1" height="16.1" fill="#d2d2d4"/><rect x="783.4" y="932" width="16.1" height="16.1" fill="#d0d0d3"/><rect x="799.3" y="932" width="16.1" height="16.1" fill="#c8c8cb"/><rect x="815.2" y="932" width="16.1" height="16.1" fill="#d0d0d2"/><rect x="831.1" y="932" width="16.1" height="16.1" fill="#d5d5d7"/><rect x="847.0" y="932" width="16.1" height="16.1" fill="#bbbbbe"/><rect x="862.9" y="932" width="16.1" height="16.1" fill="#e4e4e6"/><rect x="688.0" y="948" width="16.1" height="16.1" fill="#ececed"/><rect x="703.9" y="948" width="16.1" height="16.1" fill="#e5e5e7"/><rect x="719.8" y="948" width="16.1" height="16.1" fill="#efeff0"/><rect x="735.7" y="948" width="16.1" height="16.1" fill="#e8e8ea"/><rect x="751.6" y="948" width="16.1" height="16.1" fill="#ebebec"/><rect x="767.5" y="948" width="16.1" height="16.1" fill="#eeeeef"/><rect x="783.4" y="948" width="16.1" height="16.1" fill="#e9e9eb"/><rect x="799.3" y="948" width="16.1" height="16.1" fill="#e9e9eb"/><rect x="815.2" y="948" width="16.1" height="16.1" fill="#eaeaec"/><rect x="831.1" y="948" width="16.1" height="16.1" fill="#eaeaec"/><rect x="688.0" y="964" width="16.1" height="16.1" fill="#eaeaeb"/><rect x="703.9" y="964" width="16.1" height="16.1" fill="#e1e1e3"/><rect x="719.8" y="964" width="16.1" height="16.1" fill="#ededee"/><rect x="735.7" y="964" width="16.1" height="16.1" fill="#ebebec"/><rect x="751.6" y="964" width="16.1" height="16.1" fill="#e8e8ea"/><rect x="767.5" y="964" width="16.1" height="16.1" fill="#e5e5e7"/><rect x="783.4" y="964" width="16.1" height="16.1" fill="#e3e3e5"/><rect x="799.3" y="964" width="16.1" height="16.1" fill="#e8e8ea"/><rect x="815.2" y="964" width="16.1" height="16.1" fill="#e8e8ea"/><rect x="831.1" y="964" width="16.1" height="16.1" fill="#e8e8ea"/><rect x="847.0" y="964" width="16.1" height="16.1" fill="#fdfdfd"/><rect x="862.9" y="964" width="16.1" height="16.1" fill="#fdfdfd"/><g fill="none" stroke="#15172e" stroke-width="1.9"><rect x="2162.3" y="609" width="20" height="20.2" rx="2.2"/><path d="M2168.2,609 V629.2 M2176,609 V629.2"/></g><g fill="#15172e" stroke="#15172e" stroke-linejoin="round"><path d="M2235.1,607 L2241.7,614.4 H2228.5 Z" stroke-width="1.2"/><path d="M2235.1,614 V630.5" stroke-width="2" stroke-linecap="round"/><path d="M2248.7,607.5 V623.5" stroke-width="2" stroke-linecap="round"/><path d="M2242.3,623 H2255.1 L2248.7,630.5 Z" stroke-width="1.2"/></g><g fill="none" stroke="#15172e" stroke-width="1.9" stroke-linecap="round"><circle cx="2311.5" cy="617.5" r="8.2"/><path d="M2317.4,623.4 L2321.6,627.4"/></g><g fill="none" stroke="#15172e" stroke-width="2" stroke-linecap="round" stroke-linejoin="round"><path d="M2656.5,610.5 H2651.5 A1.5,1.5 0 0 0 2650,612 V627 A1.5,1.5 0 0 0 2651.5,628.5 H2667 A1.5,1.5 0 0 0 2668.5,627 V622"/><path d="M2656.5,623 C2656.5,617 2660,614 2667.5,614 M2664,610.2 L2668,614 L2664,617.8"/></g><path d="M2776.1,614.2 H2790 L2783,623.7 Z" fill="#15172e"/><path d="M845.0,712.7 H861.5 L853.2,726 Z" fill="#15172e"/><path d="M1154.1,712.7 H1170.6 L1162.4,726 Z" fill="#15172e"/><path d="M1463.9,712.7 H1480.4 L1472.2,726 Z" fill="#15172e"/><path d="M1773.9,712.7 H1790.4 L1782.2,726 Z" fill="#15172e"/><rect x="1837" y="705" width="29" height="28.8" rx="7" fill="#0a7cff"/><path d="M1850.8,711.8 V727.8 M1842.9,719.8 H1858.9" stroke="#fff" stroke-width="1.7" stroke-linecap="round"/><circle cx="1334.7" cy="836.5" r="9.6" fill="none" stroke="#6b6d7b" stroke-width="1.9"/><circle cx="1334.7" cy="832.8" r="1.3" fill="#6b6d7b"/><path d="M1334.7,836.5 V842" stroke="#6b6d7b" stroke-width="2" stroke-linecap="round"/><circle cx="2372" cy="836.5" r="9.6" fill="none" stroke="#6b6d7b" stroke-width="1.9"/><circle cx="2372" cy="832.8" r="1.3" fill="#6b6d7b"/><path d="M2372,836.5 V842" stroke="#6b6d7b" stroke-width="2" stroke-linecap="round"/><circle cx="1236.6" cy="945" r="9" fill="#14b48c"/><path d="M1793,947.3 H1800.5 M1804.3,947.3 H1811.8 M1815.6,947.3 H1823.1" stroke="#555868" stroke-width="1.8"/><circle cx="2753.8" cy="935.2" r="3" fill="#555868"/><circle cx="2753.8" cy="944.7" r="3" fill="#555868"/><circle cx="2753.8" cy="954.2" r="3" fill="#555868"/><g transform="translate(646,945)"><text x="0" y="2" text-anchor="middle" font-family="Liberation Sans" font-size="17" fill="#15172e" letter-spacing="-0.3">aws</text><path d="M-15.5,5.5 C-7,10.5 7,10.5 14,5.8" fill="none" stroke="#f79400" stroke-width="1.8" stroke-linecap="round"/><path d="M11,4.3 L15.5,5 L14.2,9" fill="none" stroke="#f79400" stroke-width="1.6" stroke-linecap="round" stroke-linejoin="round"/></g><g fill="none" stroke="#c8ccd8" stroke-linecap="round"><circle cx="1516.2" cy="946.2" r="11.3" stroke-width="2.2"/><circle cx="1516.2" cy="946.2" r="2.6" stroke-width="1.8"/><path d="M1516.2,942.7 L1516.2,929.0 M1518.9,944.0 L1529.6,935.5 M1519.6,947.0 L1533.0,950.0 M1517.7,949.4 L1523.7,961.7 M1514.7,949.4 L1508.7,961.7 M1512.8,947.0 L1499.4,950.0 M1513.5,944.0 L1502.8,935.5 " stroke-width="2"/></g><path d="M1564.5,956.8 H1589.5 C1593,956.8 1595.2,953.8 1595.2,950 C1595.2,946.5 1593,944 1590,943.5 C1589.5,937.5 1585.5,933.7 1580.5,933.7 C1576.8,933.7 1574,935.8 1572.5,939.2 C1568.5,938.5 1565,941.5 1564.8,946 C1562,946.5 1560,949 1560,951.5 C1560,954.5 1562,956.8 1564.5,956.8 Z" fill="#0a7cff"/><circle cx="1594" cy="929" r="7" fill="#ff3347"/><g fill="none" stroke="#c8ccd8" stroke-width="2.4" stroke-linejoin="round"><path d="M1636,956.5 H1624.5 A1.5,1.5 0 0 1 1623,955 V930.5 A1.5,1.5 0 0 1 1624.5,929 H1646 A1.5,1.5 0 0 1 1647.5,930.5 V942.5"/><path d="M1623,937.4 H1647.5 M1623,945.8 H1640"/></g><g fill="#c8ccd8"><circle cx="1627.5" cy="933.8" r="1.3"/><circle cx="1627.5" cy="942" r="1.3"/><circle cx="1627.5" cy="951.5" r="1.3"/><rect x="1642.3" y="953" width="15.3" height="9.8" rx="1.3"/></g><path d="M1645.5,953.5 V949.5 A4.5,4.5 0 0 1 1654.5,949.5 V953.5" fill="none" stroke="#c8ccd8" stroke-width="2"/><g fill="#c8ccd8"><path d="M1704.5,938.5 L1707.5,941.5 L1687.5,961.5 L1684.5,958.5 Z" fill="none" stroke="#c8ccd8" stroke-width="2.2" stroke-linejoin="round"/><path d="M1703,940 L1706,943 L1708.5,940.5 L1705.5,937.5 Z"/><path d="M1711.5,928 L1713,933 L1718,934.5 L1713,936 L1711.5,941 L1710,936 L1705,934.5 L1710,933 Z"/><path d="M1692.5,928.5 L1693.5,931.5 L1696.5,932.5 L1693.5,933.5 L1692.5,936.5 L1691.5,933.5 L1688.5,932.5 L1691.5,931.5 Z"/><path d="M1712,948 L1713,951 L1716,952 L1713,953 L1712,956 L1711,953 L1708,952 L1711,951 Z"/></g></svg>
<div class="a" style="left:2806px;top:102px;width:61px;height:1388px;background:linear-gradient(to right,rgba(0,0,0,0),rgba(0,0,0,.06))"></div>
<div class="a" style="left:2754.9px;top:1379.7px;width:86px;height:86px;border-radius:50%;background:#0a84ff;box-shadow:0 4px 40px rgba(0,0,0,.28)"></div>
<svg class="a" style="left:2754.9px;top:1379.7px" width="86" height="86" viewBox="0 0 86 86"><defs><clipPath id="fc"><circle cx="42.5" cy="43.2" r="21"/></clipPath></defs><circle cx="42.5" cy="43.2" r="21" fill="#fff"/><g clip-path="url(#fc)" fill="none" stroke="#0a84ff" stroke-width="1.5"><circle cx="15.35" cy="43.2" r="12.9"/><circle cx="15.35" cy="43.2" r="17.3"/><circle cx="15.35" cy="43.2" r="22.6"/><circle cx="15.35" cy="43.2" r="28.25"/></g><circle cx="42.5" cy="43.2" r="9" fill="#0a84ff"/></svg>
</div>
</body></html>
